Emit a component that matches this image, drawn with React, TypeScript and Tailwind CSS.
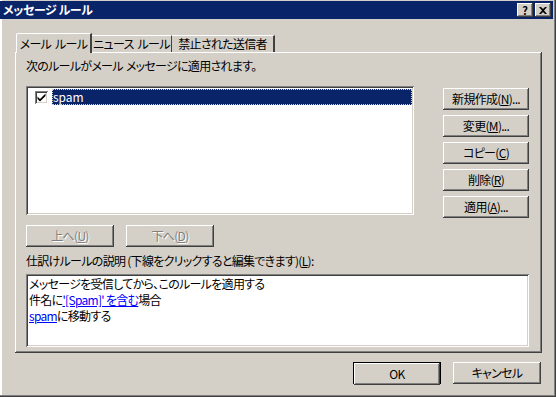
import React from "react";

const raised =
  "shadow-[inset_-1px_-1px_#404040,inset_1px_1px_#ffffff,inset_-2px_-2px_#808080,inset_2px_2px_#d4d0c8]";
const sunken =
  "shadow-[inset_1px_1px_#808080,inset_-1px_-1px_#ffffff,inset_2px_2px_#404040,inset_-2px_-2px_#d4d0c8]";

function Btn({
  children,
  className = "",
  disabled = false,
}: {
  children: React.ReactNode;
  className?: string;
  disabled?: boolean;
}) {
  return (
    <div
      className={`h-[22px] bg-[#d4d0c8] flex items-center justify-center ${raised} ${
        disabled ? "text-[#808080] [text-shadow:1px_1px_#ffffff]" : "text-black"
      } ${className}`}
    >
      {children}
    </div>
  );
}

function U({ children }: { children: React.ReactNode }) {
  return <span className="underline underline-offset-[1px]">{children}</span>;
}

export default function App() {
  return (
    <div
      className="w-[556px] h-[397px] bg-[#d4d0c8] flex flex-col text-[12px] leading-[16px] tracking-[-0.7px] text-black shadow-[inset_-1px_-1px_#404040,inset_-2px_-2px_#808080,inset_2px_0_#ffffff] [font-feature-settings:'palt'] overflow-hidden"
      style={{ fontFamily: '"Noto Sans CJK JP", "Noto Sans", sans-serif' }}
    >
      {/* Title bar */}
      <div className="mt-[1px] mr-[3px] h-[18px] bg-[#0a246a] flex items-center justify-between pl-[3px] pr-[2px]">
        <span className="text-white font-bold text-[12px] tracking-[-0.4px]">メッセージ ルール</span>
        <div className="flex gap-[2px]">
          <div className={`w-[16px] h-[14px] bg-[#d4d0c8] ${raised} flex items-center justify-center text-[11px] font-bold leading-none tracking-normal`}>
            ?
          </div>
          <div className={`w-[16px] h-[14px] bg-[#d4d0c8] ${raised} flex items-center justify-center`}>
            <svg width="8" height="7" viewBox="0 0 8 7">
              <path d="M0 0h2l2 2 2-2h2L5 3.5 8 7H6L4 5 2 7H0l3-3.5z" fill="#000" />
            </svg>
          </div>
        </div>
      </div>

      {/* Tabs */}
      <div className="mt-[14px] ml-[16px] flex items-end h-[19px] relative z-10">
        <div className="w-[76px] h-[20px] mb-[-1px] bg-[#d4d0c8] border-l border-t border-white border-r-2 border-r-[#404040] flex items-center justify-center rounded-tl-[2px]">
          メール<span className="ml-[4px]">ルール</span>
        </div>
        <div className="w-[80px] h-[17px] border-t border-white border-r border-r-[#404040] flex items-center justify-center">
          ニュース<span className="ml-[4px]">ルール</span>
        </div>
        <div className="w-[103px] h-[17px] border-t border-white border-r-2 border-r-[#404040] flex items-center justify-center">
          禁止された送信者
        </div>
      </div>

      {/* Tab panel */}
      <div className={`ml-[15px] w-[527px] h-[301px] ${raised} pt-[6px] pl-[11px] flex flex-col`}>
        <div className="h-[16px]">
          次のルールがメール<span className="ml-[3px]">メッセージに適用されます。</span>
        </div>

        <div className="mt-[12px] flex">
          <div className={`w-[388px] h-[129px] bg-white ${sunken} p-[2px]`}>
            <div className="mt-[1px] flex items-center h-[16px]">
              <div className={`ml-[7px] w-[13px] h-[13px] bg-white ${sunken} flex items-center justify-center`}>
                <svg width="9" height="9" viewBox="0 0 9 9">
                  <path d="M0.5 3.5l2.5 2.5 5.5-5.5v2.5L3 8.5 0.5 6z" fill="#000" />
                </svg>
              </div>
              <div className="ml-[4px] flex-1 h-[16px] bg-[#0a246a] text-white pl-[1px] tracking-normal outline outline-1 outline-dotted outline-[#d4d0c8] -outline-offset-1 flex items-center">
                spam
              </div>
            </div>
          </div>
          <div className="ml-[29px] mt-[2px] flex flex-col gap-[5px] w-[86px]">
            <Btn>
              新規作成(<U>N</U>)...
            </Btn>
            <Btn>
              変更(<U>M</U>)...
            </Btn>
            <Btn>
              コピー(<U>C</U>)
            </Btn>
            <Btn>
              削除(<U>R</U>)
            </Btn>
            <Btn>
              適用(<U>A</U>)...
            </Btn>
          </div>
        </div>

        <div className="mt-[7px] flex gap-[12px]">
          <Btn disabled className="w-[88px]">
            上へ(<U>U</U>)
          </Btn>
          <Btn disabled className="w-[88px]">
            下へ(<U>D</U>)
          </Btn>
        </div>

        <div className="mt-[6px] h-[16px]">
          仕訳けルールの説明 (下線をクリックすると編集できます)(<U>L</U>):
        </div>

        <div className={`mt-[5px] w-[503px] h-[73px] bg-white ${sunken} pt-[2px] pl-[3px]`}>
          <div>メッセージを受信してから、このルールを適用する</div>
          <div>
            件名に<span className="text-[#0000ff] underline">'[Spam]' を含む</span>場合
          </div>
          <div>
            <span className="text-[#0000ff] underline">spam</span>に移動する
          </div>
        </div>
      </div>

      {/* Bottom buttons */}
      <div className="mt-[9px] ml-[353px] flex gap-[12px]">
        <div className="w-[88px] h-[22px] border border-black">
          <Btn className="w-full h-[20px]">OK</Btn>
        </div>
        <Btn className="w-[88px]">キャンセル</Btn>
      </div>
    </div>
  );
}
